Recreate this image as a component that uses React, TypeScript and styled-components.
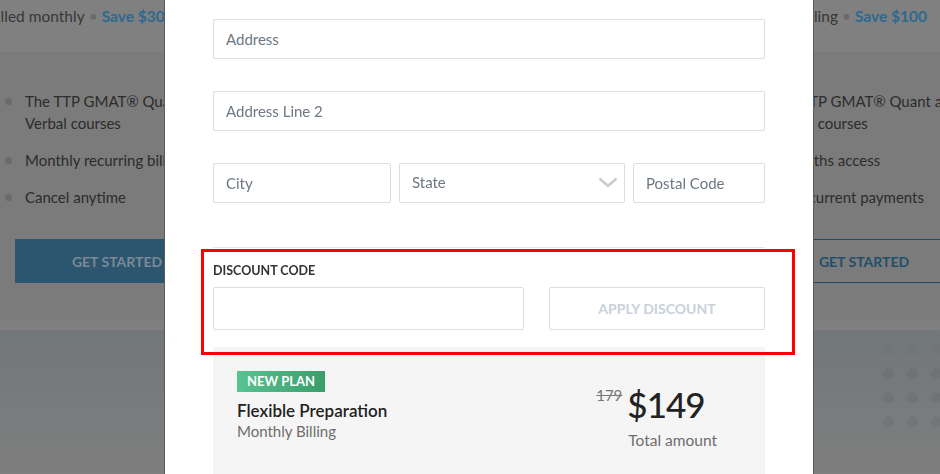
import React from 'react'
import styled, { createGlobalStyle } from 'styled-components'

const GlobalStyle = createGlobalStyle`
    * { box-sizing: border-box; }
    body {
        margin: 0;
        overflow: hidden;
        font-family: 'Lato', 'Open Sans', sans-serif;
        color: #222;
    }
`

const Page = styled.div`
    width: 940px;
    height: 474px;
    overflow: hidden;
    display: flex;
    flex-direction: column;
    background: #7b7b7b;
`

const TopStrip = styled.div`
    height: 52px;
    background: #808080;
    display: flex;
    justify-content: space-between;
    padding: 6px 13px 0 0;
    font-size: 15.5px;
    color: #383838;
    white-space: nowrap;
`

const Promo = styled.div<{ $shift?: number }>`
    margin-left: ${(p) => p.$shift ?? 0}px;
    line-height: 20px;
`

const Sep = styled.span`
    color: #6a6a6a;
    margin: 0 4px;
`

const Save = styled.span`
    color: #2c6a8f;
    font-weight: 700;
`

const Plans = styled.div`
    height: 268px;
    display: grid;
    grid-template-columns: 747px 1fr;
    padding-top: 38px;
    white-space: nowrap;
`

const PlanCol = styled.div`
    display: flex;
    flex-direction: column;
`

const Features = styled.ul`
    list-style: none;
    margin: 0;
    padding: 0;
    display: flex;
    flex-direction: column;
    gap: 15px;
`

const Feature = styled.li`
    display: flex;
    align-items: flex-start;
    font-size: 15px;
    line-height: 22px;
    color: #2c2c2c;
`

const Bullet = styled.span`
    width: 7px;
    height: 7px;
    border-radius: 50%;
    background: #6b6b6b;
    margin: 8px 13px 0 5px;
    flex-shrink: 0;
`

const FeatureText = styled.span`
    white-space: normal;
    width: 200px;
`

const GetStarted = styled.button<{ $outline?: boolean }>`
    margin: 31px 0 0 15px;
    width: 204px;
    height: 44px;
    font-family: inherit;
    font-size: 14px;
    font-weight: 700;
    border: none;
    border-top: 1px solid ${(p) => (p.$outline ? '#1d4a63' : 'transparent')};
    border-bottom: 1px solid ${(p) => (p.$outline ? '#1d4a63' : 'transparent')};
    background: ${(p) => (p.$outline ? 'transparent' : '#2c5570')};
    color: ${(p) => (p.$outline ? '#1f4f6d' : '#7b8a95')};
`

const Bottom = styled.div`
    flex: 1;
    display: flex;
    background: linear-gradient(#7f7f7f 0, #7f7f7f 10px, #72777a 10px, #7e7e7e 100%);
    padding-top: 24px;
`

const Dots = styled.div`
    margin-left: auto;
    margin-right: -26px;
    display: grid;
    grid-template-columns: repeat(4, 11px);
    grid-auto-rows: 11px;
    gap: 13px;
`

const Dot = styled.span<{ $faint?: boolean }>`
    border-radius: 50%;
    background: ${(p) => (p.$faint ? 'rgba(0, 0, 0, 0.02)' : 'rgba(0, 0, 0, 0.05)')};
`

const Overlay = styled.div`
    position: fixed;
    inset: 0;
    display: flex;
    padding-left: 165px;
`

const Modal = styled.div`
    position: relative;
    width: 648px;
    height: 100%;
    background: #fff;
    box-shadow: -1px 0 0 #5c5c5c, 1px 0 0 #5c5c5c;
    padding: 19px 48px 0;
    display: flex;
    flex-direction: column;
`

const Fields = styled.div`
    display: flex;
    flex-direction: column;
    gap: 32px;
`

const Row = styled.div`
    display: grid;
    grid-template-columns: 178px 226px 132px;
    gap: 8px;
`

const Input = styled.input<{ $tall?: boolean }>`
    width: 100%;
    height: ${(p) => (p.$tall ? 43 : 40)}px;
    border: 1px solid #d9dee4;
    border-radius: 2px;
    padding: 0 12px 1px;
    font-family: inherit;
    font-size: 15px;
    color: #333;
    outline: none;
    &::placeholder {
        color: #6e7781;
    }
`

const SelectWrap = styled.div`
    position: relative;
`

const Select = styled.select`
    width: 100%;
    height: 40px;
    appearance: none;
    border: 1px solid #d9dee4;
    border-radius: 2px;
    padding: 0 12px 2px;
    background: #fff;
    font-family: inherit;
    font-size: 15px;
    color: #6e7781;
    outline: none;
`

const Chevron = styled.svg`
    position: absolute;
    right: 7px;
    top: 14px;
    pointer-events: none;
`

const Divider = styled.div`
    margin-top: 44px;
    border-top: 1px solid #e4e7eb;
`

const Discount = styled.div`
    padding-top: 16px;
`

const Label = styled.div`
    font-size: 12.5px;
    font-weight: 700;
    color: #333;
    line-height: 14px;
    text-transform: uppercase;
`

const DiscountRow = styled.div`
    margin-top: 9px;
    display: grid;
    grid-template-columns: 311px 216px;
    justify-content: space-between;
`

const ApplyButton = styled.button`
    height: 43px;
    border: 1px solid #d9dee4;
    border-radius: 2px;
    background: #fff;
    font-family: inherit;
    font-size: 14px;
    font-weight: 700;
    color: #c8d1dc;
    text-transform: uppercase;
`

const Highlight = styled.div`
    position: absolute;
    left: 36px;
    top: 249px;
    width: 594px;
    height: 106px;
    border: 3px solid #ff0000;
    pointer-events: none;
`

const PlanCard = styled.div`
    margin-top: 17px;
    flex: 1;
    background: #f5f5f5;
    padding: 23px 48px 0 24px;
    display: flex;
    justify-content: space-between;
    align-items: flex-start;
`

const Badge = styled.span`
    display: inline-block;
    height: 21px;
    line-height: 21px;
    padding: 0 10px;
    font-size: 13px;
    font-weight: 700;
    color: #fff;
    background: linear-gradient(90deg, #57c491, #3a9c6b);
`

const PlanName = styled.div`
    margin-top: 9px;
    font-size: 17px;
    line-height: 20px;
    font-weight: 600;
    color: #222;
`

const PlanSub = styled.div`
    font-size: 15px;
    line-height: 20px;
    color: #6d6d6d;
`

const PriceBlock = styled.div`
    padding-top: 16px;
    display: flex;
    flex-direction: column;
    align-items: flex-start;
`

const PriceLine = styled.div`
    display: flex;
    align-items: flex-start;
    margin-left: -32px;
`

const OldPrice = styled.s`
    font-size: 15px;
    color: #777;
    margin: 0 5px 0 0;
`

const Price = styled.span`
    font-size: 35px;
    line-height: 36px;
    font-weight: 500;
    color: #222;
    letter-spacing: -1px;
`

const Total = styled.div`
    margin-top: 9px;
    font-size: 15.5px;
    color: #6d6d6d;
`

const dotRows = [true, false, false, false]

const App: React.FC = () => {
    return (
        <>
            <GlobalStyle />
            <Page>
                <TopStrip>
                    <Promo $shift={-13}>
                        Billed monthly<Sep>•</Sep>
                        <Save>Save $300</Save>
                    </Promo>
                    <Promo>
                        Yearly billing<Sep>•</Sep>
                        <Save>Save $100</Save>
                    </Promo>
                </TopStrip>
                <Plans>
                    <PlanCol>
                        <Features>
                            <Feature>
                                <Bullet />
                                <FeatureText>The TTP GMAT® Quant and Verbal courses</FeatureText>
                            </Feature>
                            <Feature>
                                <Bullet />
                                Monthly recurring billing
                            </Feature>
                            <Feature>
                                <Bullet />
                                Cancel anytime
                            </Feature>
                        </Features>
                        <GetStarted>GET STARTED</GetStarted>
                    </PlanCol>
                    <PlanCol>
                        <Features>
                            <Feature>
                                <Bullet />
                                <FeatureText>The TTP GMAT® Quant and Verbal courses</FeatureText>
                            </Feature>
                            <Feature>
                                <Bullet />
                                6 months access
                            </Feature>
                            <Feature>
                                <Bullet />
                                No recurrent payments
                            </Feature>
                        </Features>
                        <GetStarted $outline>GET STARTED</GetStarted>
                    </PlanCol>
                </Plans>
                <Bottom>
                    <Dots>
                        {dotRows.map((faint, r) =>
                            [0, 1, 2, 3].map((c) => <Dot key={`${r}-${c}`} $faint={faint} />)
                        )}
                    </Dots>
                </Bottom>
            </Page>
            <Overlay>
                <Modal>
                    <Fields>
                        <Input placeholder="Address" />
                        <Input placeholder="Address Line 2" />
                        <Row>
                            <Input placeholder="City" />
                            <SelectWrap>
                                <Select defaultValue="">
                                    <option value="">State</option>
                                </Select>
                                <Chevron width="20" height="11" viewBox="0 0 20 11">
                                    <path d="M1.5 1.5 L10 9 L18.5 1.5" fill="none" stroke="#c9c9c9" strokeWidth="2.4" />
                                </Chevron>
                            </SelectWrap>
                            <Input placeholder="Postal Code" />
                        </Row>
                    </Fields>
                    <Divider />
                    <Discount>
                        <Label>Discount Code</Label>
                        <DiscountRow>
                            <Input $tall />
                            <ApplyButton>Apply Discount</ApplyButton>
                        </DiscountRow>
                    </Discount>
                    <PlanCard>
                        <div>
                            <Badge>NEW PLAN</Badge>
                            <PlanName>Flexible Preparation</PlanName>
                            <PlanSub>Monthly Billing</PlanSub>
                        </div>
                        <PriceBlock>
                            <PriceLine>
                                <OldPrice>179</OldPrice>
                                <Price>$149</Price>
                            </PriceLine>
                            <Total>Total amount</Total>
                        </PriceBlock>
                    </PlanCard>
                    <Highlight />
                </Modal>
            </Overlay>
        </>
    )
}

export default App
